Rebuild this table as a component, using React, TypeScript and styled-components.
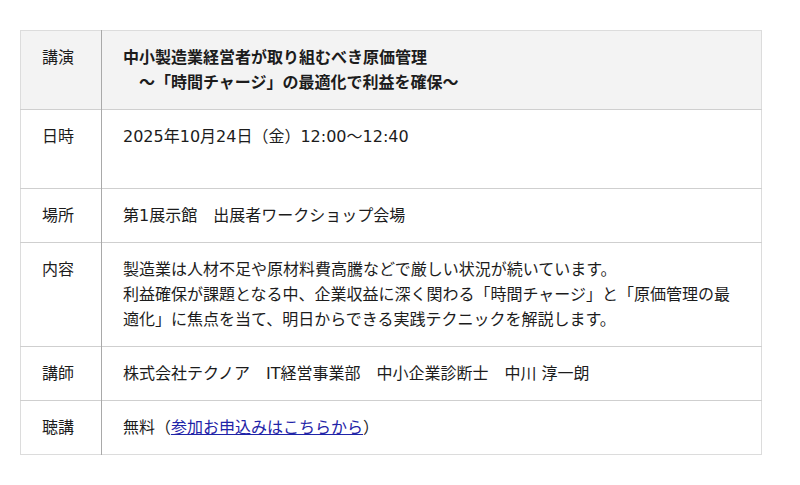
import React from 'react';
import styled, { createGlobalStyle } from 'styled-components';

const GlobalStyle = createGlobalStyle`
  html, body {
    margin: 0;
    padding: 0;
    background: #fff;
  }
  body {
    font-family: 'DejaVu Sans', 'Noto Sans CJK JP', sans-serif;
    color: #1c1c1c;
  }
`;

const Page = styled.div`
  padding: 30px 20px;
`;

const Table = styled.table`
  width: 742px;
  border-collapse: collapse;
  border: 1px solid #dcdcdc;
  font-size: 16px;
  line-height: 25px;
`;

const Row = styled.tr<{ $head?: boolean }>`
  background: ${p => (p.$head ? '#f3f3f3' : '#fff')};
  border-bottom: 1px solid #cfcfcf;

  &:last-child {
    border-bottom: 1px solid #dcdcdc;
  }
`;

const Label = styled.th`
  width: 59px;
  padding: 14px 0 14px 21px;
  text-align: left;
  vertical-align: top;
  font-weight: normal;
  border-right: 1px solid #a9a9a9;
  white-space: nowrap;
`;

const Cell = styled.td<{ $bold?: boolean }>`
  padding: 14px 20px 14px 21px;
  vertical-align: top;
  font-weight: ${p => (p.$bold ? 'bold' : 'normal')};
`;

const Link = styled.a`
  color: #1f24a8;
  text-decoration: underline;
`;

const rows: { label: string; body: React.ReactNode; head?: boolean }[] = [
  {
    label: '講演',
    head: true,
    body: (
      <>
        中小製造業経営者が取り組むべき原価管理
        <br />
        {'\u3000〜「時間チャージ」の最適化で利益を確保〜'}
      </>
    ),
  },
  {
    label: '日時',
    body: (
      <>
        2025年10月24日（金）12:00〜12:40
        <br />
        <br />
      </>
    ),
  },
  { label: '場所', body: '第1展示館　出展者ワークショップ会場' },
  {
    label: '内容',
    body: (
      <>
        製造業は人材不足や原材料費高騰などで厳しい状況が続いています。
        <br />
        利益確保が課題となる中、企業収益に深く関わる「時間チャージ」と「原価管理の最適化」に焦点を当て、明日からできる実践テクニックを解説します。
      </>
    ),
  },
  { label: '講師', body: '株式会社テクノア　IT経営事業部　中小企業診断士　中川 淳一朗' },
  {
    label: '聴講',
    body: (
      <>
        無料（<Link href="#">参加お申込みはこちらから</Link>）
      </>
    ),
  },
];

export default function App() {
  return (
    <>
      <GlobalStyle />
      <Page>
        <Table>
          <tbody>
            {rows.map(r => (
              <Row key={r.label} $head={r.head}>
                <Label>{r.label}</Label>
                <Cell $bold={r.head}>{r.body}</Cell>
              </Row>
            ))}
          </tbody>
        </Table>
      </Page>
    </>
  );
}
